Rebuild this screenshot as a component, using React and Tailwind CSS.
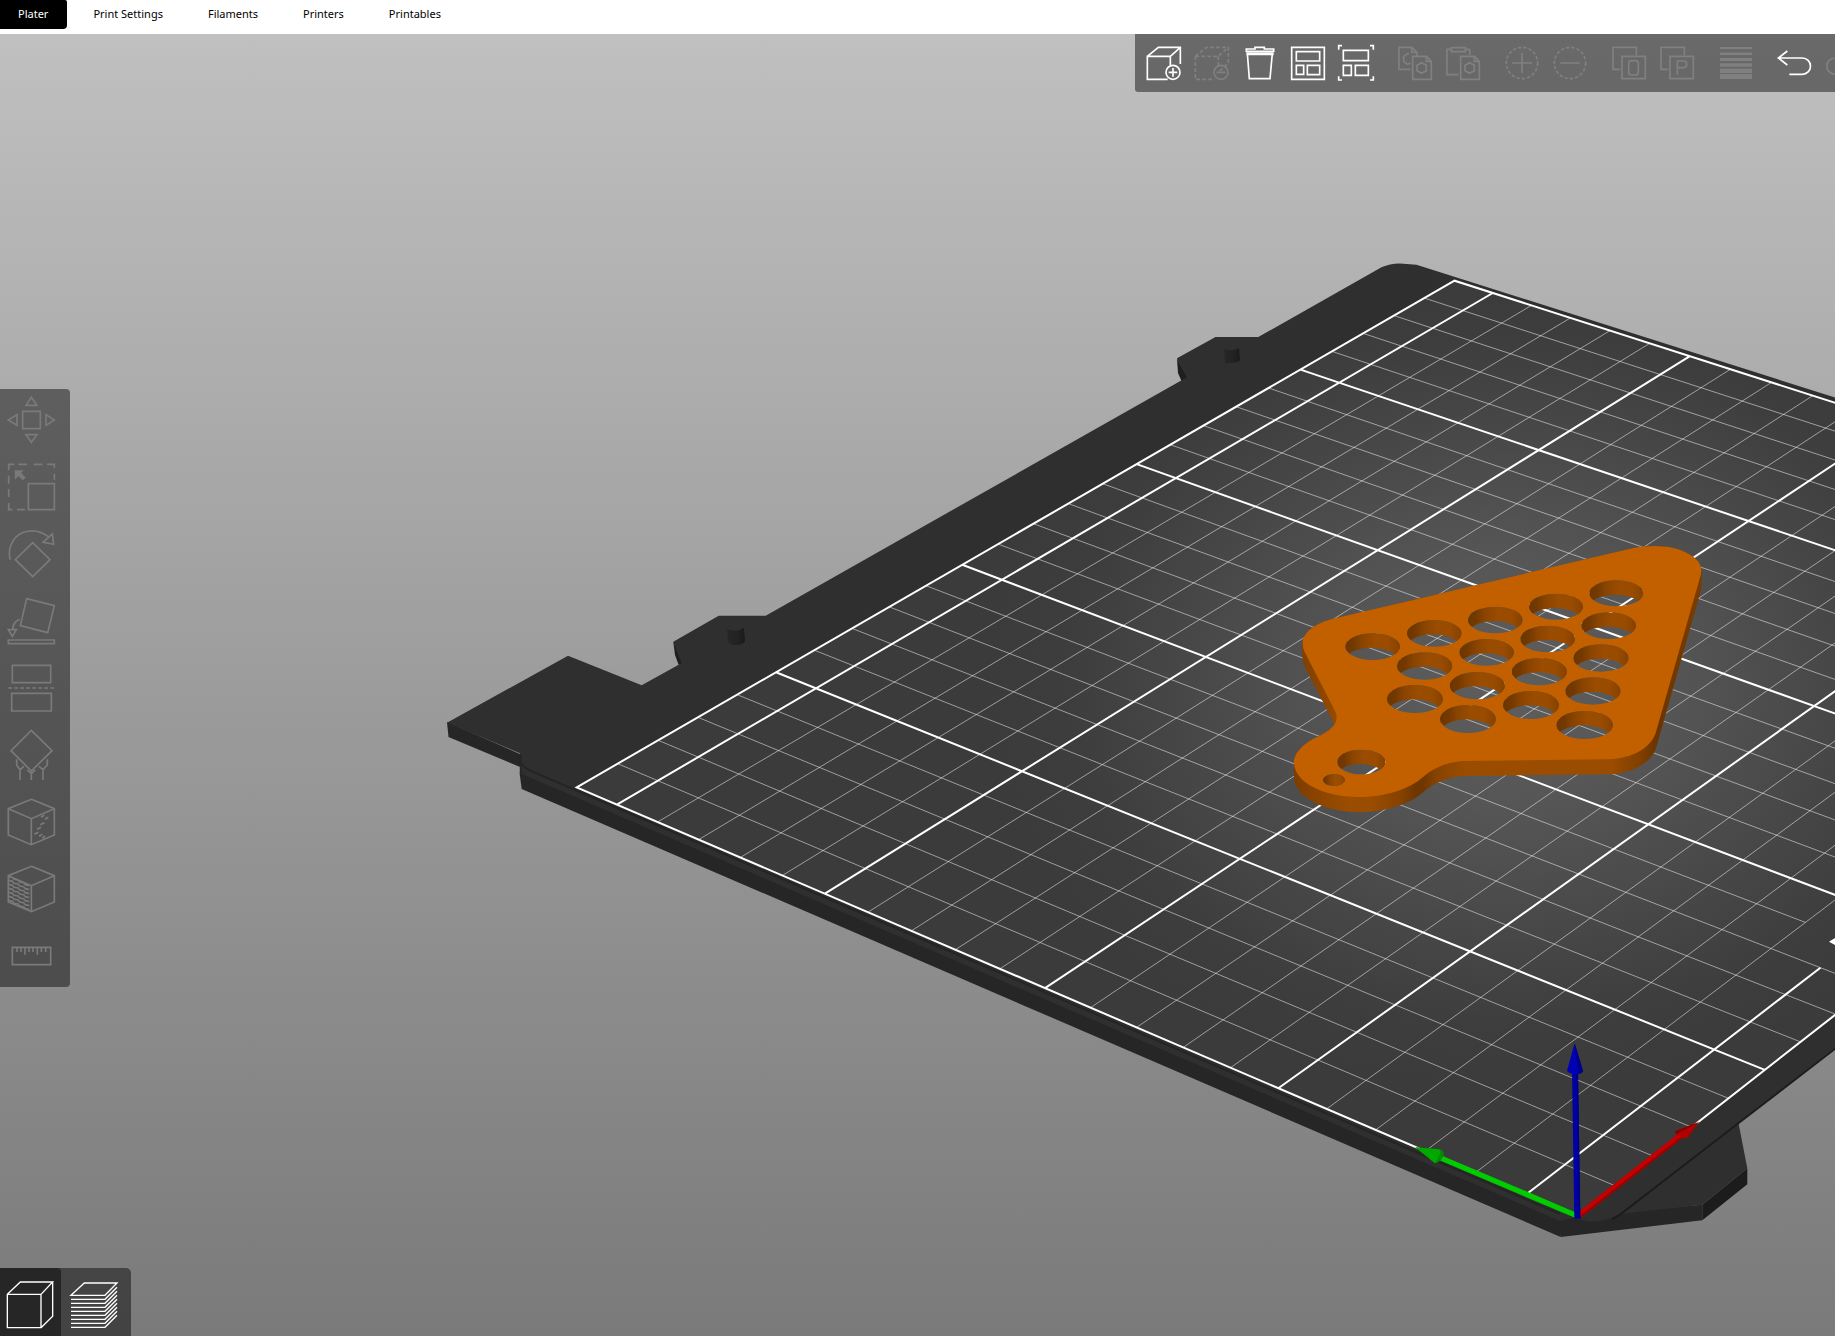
import React from "react";

const TABS = ["Plater", "Print Settings", "Filaments", "Printers", "Printables"];

/* ---------- Print bed projection ---------- */

// Projects a bed position, in 10 mm cells, to the viewport.
function project(u, v) {
  const w = 1 + 0.007961 * u + 0.00624 * v;
  const x = (51.511 * u - 41.892 * v + 1577.5) / w;
  const y = (-20.811 * u - 14.596 * v + 1216.5) / w;
  return [x.toFixed(1), y.toFixed(1)];
}

function segment(u1, v1, u2, v2) {
  const [x1, y1] = project(u1, v1);
  const [x2, y2] = project(u2, v2);
  return `M${x1} ${y1}L${x2} ${y2}`;
}

const range = (n) => Array.from({ length: n }, (_, i) => i);

const bedArea = `M${project(0, 0).join(" ")}L${project(0, 22).join(" ")}L${project(25, 22).join(" ")}L${project(25, 0).join(" ")}Z`;

const thinLines = [
  ...range(22).filter((v) => v % 5 !== 1).map((v) => segment(0, v, 25, v)),
  ...range(25).filter((u) => u % 5 !== 0).map((u) => segment(u, u > 8 ? 2 : 0, u, 22)),
].join("");

const boldLines = [
  segment(0, 1, 8, 1),
  ...[6, 11, 16, 21].map((v) => segment(0, v, 25, v)),
  ...[5, 10, 15, 20].map((u) => segment(u, u > 8 ? 2 : 0, u, 22)),
  bedArea,
].join("");

/* ---------- Orange model ---------- */

const PLATE =
  "M68 338C68 308 104 280 160 266L1045 58C1085 47 1125 46 1160 50C1215 57 1264 88 1264 117C1264 128 1262 138 1258 150L1128 606C1116 650 1060 686 985 688L555 693C500 695 460 715 430 740C390 778 310 801 235 801C130 801 42 757 42 697C42 665 78 637 110 622C150 603 170 585 170 562C170 553 166 545 162 537L76 370C70 358 68 350 68 338Z";

const HOLES = [
  [278, 350, 82, 40], [463, 310, 82, 40], [646, 270, 82, 40], [828, 230, 81, 39], [1009, 190, 81, 39],
  [434, 408, 83, 41], [620, 367, 82, 40], [803, 327, 82, 40], [986, 287, 82, 40],
  [405, 507, 84, 42], [592, 467, 83, 41], [778, 425, 83, 41], [963, 384, 83, 41],
  [564, 567, 84, 42], [753, 525, 84, 42], [939, 483, 83, 41],
  [914, 585, 85, 42],
  [244, 696, 72, 37], [162, 750, 33, 18],
];

const ellipse = (cx, cy, rx, ry) =>
  `M${cx - rx} ${cy}A${rx} ${ry} 0 1 0 ${cx + rx} ${cy}A${rx} ${ry} 0 1 0 ${cx - rx} ${cy}Z`;

const HOLE_PATH = HOLES.map((h) => ellipse(...h)).join("");

function Model() {
  return (
    <g transform="translate(1280 530) scale(0.33333)">
      <defs>
        <linearGradient id="side" gradientUnits="userSpaceOnUse" x1="42" y1="0" x2="1264" y2="0">
          <stop offset="0" stopColor="#7c3d00" />
          <stop offset="0.05" stopColor="#894300" />
          <stop offset="0.13" stopColor="#9b4d00" />
          <stop offset="0.19" stopColor="#9a4c00" />
          <stop offset="0.26" stopColor="#864200" />
          <stop offset="0.3" stopColor="#6e3600" />
          <stop offset="0.315" stopColor="#6e3600" />
          <stop offset="0.35" stopColor="#874300" />
          <stop offset="0.42" stopColor="#9a4c00" />
          <stop offset="0.78" stopColor="#9a4c00" />
          <stop offset="0.85" stopColor="#803f00" />
          <stop offset="0.89" stopColor="#6b3400" />
          <stop offset="1" stopColor="#7a3c00" />
        </linearGradient>
        <linearGradient id="wall">
          <stop offset="0" stopColor="#6c3500" />
          <stop offset="0.16" stopColor="#743900" />
          <stop offset="0.32" stopColor="#8a4400" />
          <stop offset="0.55" stopColor="#9a4c00" />
          <stop offset="0.8" stopColor="#994b00" />
          <stop offset="1" stopColor="#864200" />
        </linearGradient>
        <mask id="solid" maskUnits="userSpaceOnUse" x="0" y="0" width="1320" height="900">
          <rect width="1320" height="900" fill="#fff" />
          <path d={HOLE_PATH} fill="#000" />
        </mask>
      </defs>
      <g mask="url(#solid)">
        {range(16).map((i) => (
          <path key={i} d={PLATE} fill="url(#side)" transform={`translate(${i === 0 ? 1 : 0} ${(15 - i) * 3})`} />
        ))}
        <path d={PLATE} fill="#c26000" />
      </g>
      {HOLES.map(([cx, cy, rx, ry], i) => (
        <g key={i}>
          <clipPath id={`hole-${i}`}>
            <path d={ellipse(cx, cy, rx, ry)} />
          </clipPath>
          <path
            clipPath={`url(#hole-${i})`}
            fillRule="evenodd"
            fill="url(#wall)"
            d={`M${cx - rx} ${cy - ry}H${cx + rx}V${cy + 2 * ry + 44}H${cx - rx}Z${ellipse(cx - 3, cy + 43, rx - 1, ry)}`}
          />
        </g>
      ))}
    </g>
  );
}

function Axes() {
  return (
    <g transform="translate(1380 900) scale(0.33333)">
      <path d="M588 946L178 772" stroke="#00cc00" strokeWidth="16" fill="none" />
      <path d="M106 742L176 748Q194 752 191 764Q185 785 165 790Z" fill="#008a00" />
      <path d="M106 742L176 748Q184 750 180 762Q172 782 165 790Z" fill="#00a800" />
      <path d="M597 946L906 704" stroke="#c40000" strokeWidth="18" fill="none" />
      <path d="M600 951L910 708" stroke="#9a0000" strokeWidth="5" fill="none" />
      <path d="M957 666L885 694Q884 702 896 709Q908 716 922 714Z" fill="#b00000" />
      <path d="M957 666L885 694Q884 699 890 703Z" fill="#8a0000" />
      <path d="M592 956L585 510" stroke="#0000a4" strokeWidth="18" fill="none" />
      <path d="M599 956L592 520" stroke="#00007c" strokeWidth="4" fill="none" />
      <path d="M584 430L561 512Q565 521 586 522Q606 521 609 513Z" fill="#0000b4" />
      <path d="M584 430L609 513Q606 521 594 522Z" fill="#00008e" />
    </g>
  );
}

function Scene() {
  return (
    <svg
      className="absolute inset-0 h-full w-full"
      viewBox="0 34 1835 1302"
      preserveAspectRatio="xMidYMid slice"
      role="img"
      aria-label="Print bed with model"
    >
      <defs>
        <radialGradient id="glow" gradientUnits="userSpaceOnUse" cx="0" cy="0" r="1" gradientTransform="translate(1507 681) scale(520 410)">
          <stop offset="0" stopColor="#5e5e5e" />
          <stop offset="0.3" stopColor="#565656" />
          <stop offset="0.65" stopColor="#464646" />
          <stop offset="0.85" stopColor="#3d3d3d" />
          <stop offset="1" stopColor="#3b3b3b" />
        </radialGradient>
        <linearGradient id="pin">
          <stop offset="0" stopColor="#262626" />
          <stop offset="0.6" stopColor="#222" />
          <stop offset="1" stopColor="#1a1a1a" />
        </linearGradient>
      </defs>

      {/* Foot under the front corner */}
      <path d="M1560 1221L1562 1212H1623L1702.3 1204.7V1220.3L1560.7 1237Z" fill="#262626" />
      <path d="M1702.3 1204.7L1747.3 1168.3V1184.3L1702.3 1220.3Z" fill="#1c1c1c" />
      <path d="M1612 1215L1702.3 1204.7L1747.3 1168.3L1738.3 1122L1700 1130Z" fill="#2f2f2f" />

      {/* Sides */}
      <path d="M447 722L448.5 737L520 767V754Z" fill="#262626" />
      <path d="M520 752L519.7 774L521.7 789L1560.7 1237L1562 1218Z" fill="#262626" />

      {/* Heatbed and sheet surface */}
      <path
        d="M447 722.7L568 655.7L641.7 685.3L680 664L673.3 641.7L718.7 615.7H765.7L1183 379.5L1186 376L1177 358.3L1215.5 337H1258.3L1381.5 267.3Q1390 263.4 1400 263.5L1416.5 264.7L1835 397.5V1047.7L1620 1215Q1605 1222 1590 1221.5Q1580 1220 1574 1218L1560 1221L521.7 774L520 753.3Z"
        fill="#2f2f2f"
      />
      <path d="M1177 358.3L1178 373L1181.5 381L1187 377Z" fill="#1f1f1f" />
      <path d="M673.3 641.7L675 655L678.7 665L681.5 663Z" fill="#1f1f1f" />
      <path d="M520.5 754L521 763Q523 767 530 770.5L1560 1214" stroke="#252525" strokeWidth="2" fill="none" />
      <path d="M1612 1219Q1619 1216 1626 1210L1738 1123.5L1836 1048" stroke="#1c1c1c" strokeWidth="2" fill="none" />
      <path d="M727 629Q736 633 744 628L745 641Q743 645 736 645Q729 645 728 641Z" fill="url(#pin)" />
      <path d="M1224 349Q1231 352 1239 348L1240 360Q1238 363 1232 363H1225Z" fill="url(#pin)" />

      <path d={bedArea} fill="url(#glow)" />
      <path d={thinLines} stroke="#fff" strokeOpacity="0.5" strokeWidth="1" fill="none" />
      <path d={boldLines} stroke="#fff" strokeWidth="2" fill="none" />
      <path d="M1829 941.7L1835 938V945Z" fill="#fff" />

      <Model />
      <Axes />
    </svg>
  );
}

/* ---------- Toolbar icons ---------- */

const hexagon = (x, y) => `M${x} ${y - 16}L${x + 14} ${y - 8}V${y + 8}L${x} ${y + 16}L${x - 14} ${y + 8}V${y - 8}Z`;

const TOOLS = [
  [
    {
      label: "Add",
      on: true,
      art: (
        <>
          <path d="M83 121H22V52H91V78M22 52L55 25H121V75M91 52L121 25M99 87V113M86 100H112" />
          <circle cx="99" cy="100" r="21" />
        </>
      ),
    },
    {
      label: "Delete",
      art: (
        <>
          <path d="M22 52L55 25H121V72L91 100M22 52H91L121 25M91 52V80M22 52V121H80" strokeDasharray="11 7" />
          <circle cx="99" cy="100" r="21" />
          <path d="M86 100H112" />
        </>
      ),
    },
    {
      label: "Delete all",
      on: true,
      art: <path d="M31 30H57V25H85V30H113V37H31ZM31 43H113M31 46H113M34 43L40 119H102L109 43" />,
    },
    {
      label: "Arrange",
      on: true,
      art: <path d="M23 25H121V121H23ZM37 38H107V66H37ZM37 79H59V106H37ZM70 79H107V107H70Z" />,
    },
    {
      label: "Arrange selection",
      on: true,
      art: <path d="M34 34H109V65H34ZM34 79H58V109H34ZM70 79H109V109H70ZM20 32V20H30M114 20H124V32M20 112V123H30M114 123H124V112" />,
    },
  ],
  [
    {
      label: "Copy",
      art: <path d={`M58 91H24V25H62L78 40V50M62 25V40H78M54 46L50 44L38 52V68L50 76L58 72M65 121V52H106L121 67V121ZM106 52V67H121${hexagon(92, 87)}`} />,
    },
    {
      label: "Paste",
      art: <path d={`M58 107H24V31H36M80 31H92V48M37 26H79V38H37ZM65 121V52H106L121 67V121ZM106 52V67H121${hexagon(92, 87)}`} />,
    },
  ],
  [
    {
      label: "Add instance",
      art: (
        <>
          <circle cx="72" cy="72" r="47" strokeDasharray="10 6" />
          <path d="M72 42V102M42 72H102" />
        </>
      ),
    },
    {
      label: "Remove instance",
      art: (
        <>
          <circle cx="72" cy="72" r="47" strokeDasharray="10 6" />
          <path d="M43 72H101" />
        </>
      ),
    },
  ],
  [
    {
      label: "Split to objects",
      art: <path d="M46 91H24V25H94V48M51 52H121V119H51ZM79 65H92Q100 65 100 73V100Q100 108 92 108H79Q71 108 71 100V73Q71 65 79 65Z" />,
    },
    {
      label: "Split to parts",
      art: <path d="M46 91H24V25H94V48M51 52H121V119H51ZM73 108V66H92Q101 66 101 76Q101 86 92 86H73" />,
    },
  ],
  [
    {
      label: "Variable layer height",
      art: (
        <g fill="currentColor" stroke="none">
          <rect x="24" y="24" width="96" height="6" />
          <rect x="24" y="41" width="96" height="7" />
          <rect x="24" y="57" width="96" height="9" />
          <rect x="24" y="73" width="96" height="10" />
          <rect x="24" y="89" width="96" height="13" />
          <rect x="24" y="105" width="96" height="15" />
        </g>
      ),
    },
  ],
  [
    { label: "Undo", on: true, art: <path d="M49 36L22 57L49 78M22 57H94A24 24 0 0 1 94 106H55" /> },
    { label: "Redo", art: <path d="M93 36L120 57L93 78M120 57H48A24 24 0 0 0 48 106H87" /> },
  ],
];

function TopToolbar() {
  return (
    <div
      role="toolbar"
      aria-label="Main toolbar"
      className="absolute right-0 top-0 flex h-[58px] w-[700px] items-center gap-[11px] overflow-hidden rounded-bl-[3px] bg-black/45 pl-[5px]"
    >
      {TOOLS.map((group, i) => (
        <div key={i} className="flex shrink-0">
          {group.map((tool) => (
            <button
              key={tool.label}
              type="button"
              aria-label={tool.label}
              disabled={!tool.on}
              className={tool.on ? "size-12 text-white" : "size-12 text-[#808080]"}
            >
              <svg viewBox="0 0 144 144" className="size-12" fill="none" stroke="currentColor" strokeWidth="5">
                {tool.art}
              </svg>
            </button>
          ))}
        </div>
      ))}
    </div>
  );
}

const bricks = range(9)
  .map((i) => `M10 ${28 + i * 12}l12 3l5 6l12 2l5 6l12 2l5 6l12 3`)
  .join("");

const GIZMOS = [
  {
    label: "Move",
    art: <path d="M53 52H106V104H53ZM79 10L96 34H63ZM79 145L96 122H63ZM10 78L36 62V94ZM148 78L123 62V94Z" />,
  },
  {
    label: "Scale",
    art: (
      <>
        <path d="M11 28V10H28M40 10H66M86 10H112M126 10H148V22M148 38V56M11 44V68M11 84V108M11 126V146H22M36 146H60M70 68H148V146H70Z" />
        <path d="M29 28H56L49 36L62 50L53 58L40 45L30 56Z" fill="currentColor" stroke="none" />
      </>
    ),
  },
  {
    label: "Rotate",
    art: <path d="M16 95C8 70 16 30 55 13C85 3 112 12 130 26M114 43L142 18L146 49ZM83 44L135 95L83 146L31 95Z" />,
  },
  {
    label: "Place on face",
    art: <path d="M65 11L148 32L128 113L46 92ZM44 73C30 78 24 88 23 104M10 104H34L22 124ZM10 135H148V146H10Z" />,
  },
  {
    label: "Cut",
    art: (
      <>
        <path d="M22 10H137V62H22ZM20 94H139V147H20Z" />
        <path d="M10 78H148" strokeDasharray="11 7" strokeWidth="5" />
      </>
    ),
  },
  {
    label: "Paint-on supports",
    art: <path d="M79 4L141 65L79 126L18 65ZM35 91V108L45 122L57 112M45 122V153M67 123L79 134L91 123M79 134V153M127 91V108L114 122L102 112M114 122V153" />,
  },
  {
    label: "Seam painting",
    art: (
      <path d="M79 10L148 38V117L79 146L10 117V38ZM10 38L79 68L148 38M79 68V146M108 64L118 58M120 70L130 64M106 86L118 80M96 100L108 94M88 115L100 109M102 121L112 115M112 126L120 120" />
    ),
  },
  {
    label: "Multimaterial painting",
    art: (
      <>
        <clipPath id="brick-face">
          <path d="M10 38L79 68V146L10 117Z" />
        </clipPath>
        <path d={bricks} clipPath="url(#brick-face)" />
        <path d="M79 10L148 38V117L79 146L10 117V38ZM10 38L79 68L148 38M79 68V146" />
      </>
    ),
  },
  {
    label: "Measure",
    art: <path d="M22 52H137V104H22ZM36 54V66M48 54V66M60 54V74M72 54V66M84 54V66M97 54V74M109 54V66M122 54V66" />,
  },
];

function GizmoToolbar() {
  return (
    <div className="pointer-events-none absolute inset-y-0 left-0 flex items-center pt-[6px]">
      <div
        role="toolbar"
        aria-label="Object tools"
        className="pointer-events-auto flex w-[70px] flex-col gap-[15px] rounded-r-[4px] bg-black/45 py-[5px] pl-[5px] text-[#7a7a7a]"
      >
        {GIZMOS.map((gizmo) => (
          <button key={gizmo.label} type="button" disabled aria-label={gizmo.label} className="size-[52px]">
            <svg viewBox="0 0 156 156" className="size-[52px]" fill="none" stroke="currentColor" strokeWidth="5">
              {gizmo.art}
            </svg>
          </button>
        ))}
      </div>
    </div>
  );
}

function ViewToolbar() {
  return (
    <div role="toolbar" aria-label="View" className="absolute bottom-0 left-0 flex h-[68px] rounded-tr-[5px] bg-black/45 text-white">
      <button type="button" aria-label="3D editor view" aria-pressed="true" className="w-[61px] rounded-tr-[4px] bg-[#262626]">
        <svg viewBox="0 0 183 204" className="h-[68px] w-[61px]" fill="none" stroke="currentColor" strokeWidth="4">
          <path d="M22 79H123V179H22ZM22 79L61 42H158L123 79M158 42V145L123 179" />
        </svg>
      </button>
      <button type="button" aria-label="Preview" aria-pressed="false" className="w-[70px]">
        <svg viewBox="0 0 210 204" className="h-[68px] w-[70px]" fill="none" stroke="currentColor" strokeWidth="4">
          <path d="M30 82L70 45H168L132 82Z" />
          {range(8).map((i) => (
            <path key={i} d={`M30 ${94 + i * 12}H132L168 ${58 + i * 12}`} />
          ))}
        </svg>
      </button>
    </div>
  );
}

export default function App() {
  return (
    <div className="flex h-screen flex-col overflow-hidden bg-white font-['Noto_Sans','Open_Sans',sans-serif]">
      <nav className="flex h-[34px] shrink-0 items-start gap-2 bg-white" aria-label="Main">
        {TABS.map((tab, i) => (
          <button
            key={tab}
            type="button"
            className={
              i === 0
                ? "h-[29px] rounded-br-[4px] rounded-tr-[2px] bg-black pb-px pl-[18px] pr-[19px] text-[11px] text-white"
                : "h-[29px] pb-px pl-[18px] pr-[19px] text-[11px] text-black"
            }
          >
            {tab}
          </button>
        ))}
      </nav>
      <main className="relative flex-1 overflow-hidden bg-linear-to-b from-[#c0c0c0] to-[#7a7a7a]">
        <Scene />
        <TopToolbar />
        <GizmoToolbar />
        <ViewToolbar />
      </main>
    </div>
  );
}
